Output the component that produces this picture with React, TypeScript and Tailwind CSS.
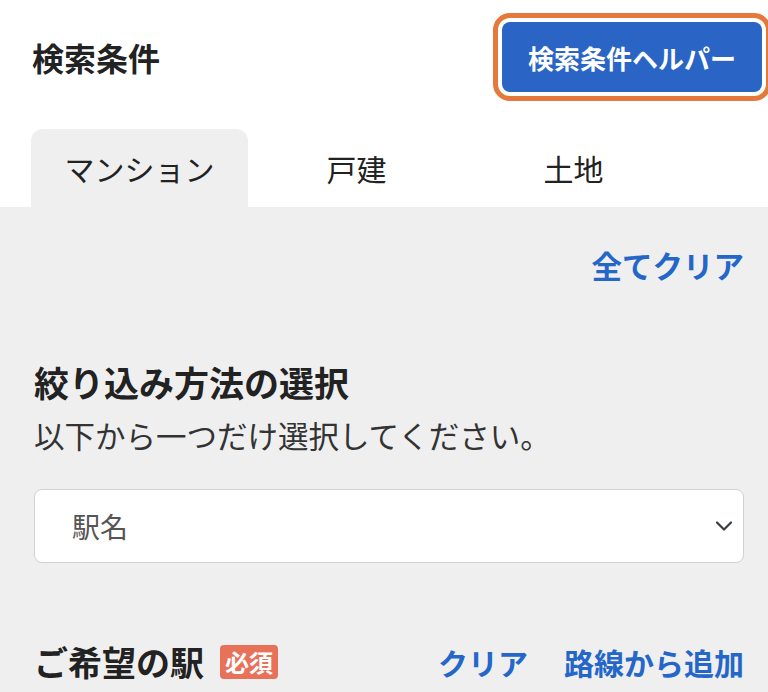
import React, { useState } from 'react';

const tabs = ['マンション', '戸建', '土地'];

export default function App() {
  const [active, setActive] = useState(0);

  return (
    <div className="w-[768px] h-[692px] overflow-hidden bg-white font-['Noto_Sans_CJK_JP',sans-serif] text-[#222]">
      {/* header */}
      <div className="flex items-center justify-between pl-[32px] pr-[6px] pt-[22px]">
        <h1 className="text-[32px] font-bold leading-[44px]">検索条件</h1>
        <button className="h-[70px] w-[260px] rounded-[8px] bg-[#2a65c6] text-[26px] font-bold text-white outline outline-[5px] outline-offset-[4px] outline-[#e5793b]">
          検索条件ヘルパー
        </button>
      </div>

      {/* tabs */}
      <div className="mt-[37px] flex pl-[31px]">
        {tabs.map((t, i) => (
          <button
            key={t}
            onClick={() => setActive(i)}
            className={`flex h-[78px] w-[217px] items-center justify-center rounded-t-[12px] text-[30px] ${
              active === i ? 'bg-[#efefef]' : 'bg-white'
            }`}
          >
            {t}
          </button>
        ))}
      </div>

      {/* panel */}
      <div className="bg-[#efefef] pl-[34px] pr-[24px] pt-[36px] pb-[40px]">
        <div className="flex justify-end">
          <a href="#" className="text-[30.5px] font-bold leading-[45px] text-[#2467c9]">全てクリア</a>
        </div>

        <h2 className="mt-[70px] text-[35px] font-bold leading-[48px]">絞り込み方法の選択</h2>
        <p className="mt-[7px] text-[30.5px] leading-[44px] text-[#333]">以下から一つだけ選択してください。</p>

        <div className="relative mt-[32px] flex h-[74px] items-center rounded-[8px] border border-[#cdd2d8] bg-white pl-[37px]">
          <span className="text-[28px] text-[#555]">駅名</span>
          <svg className="absolute right-[10px] top-1/2 -translate-y-1/2" width="18" height="12" viewBox="0 0 18 12" fill="none">
            <path d="M2 2.5 L9 9.5 L16 2.5" stroke="#3a3f45" strokeWidth="2.2" strokeLinecap="round" strokeLinejoin="round" />
          </svg>
        </div>

        <div className="mt-[75px] flex items-center justify-between">
          <div className="flex items-center gap-[16px]">
            <h3 className="text-[34px] font-bold leading-[48px]">ご希望の駅</h3>
            <span className="flex h-[34px] items-center rounded-[4px] bg-[#e8715a] px-[5px] text-[24px] font-bold text-white">必須</span>
          </div>
          <div className="flex items-center gap-[36px] text-[30px] font-bold leading-[48px] text-[#2467c9]">
            <a href="#">クリア</a>
            <a href="#">路線から追加</a>
          </div>
        </div>
      </div>
    </div>
  );
}
